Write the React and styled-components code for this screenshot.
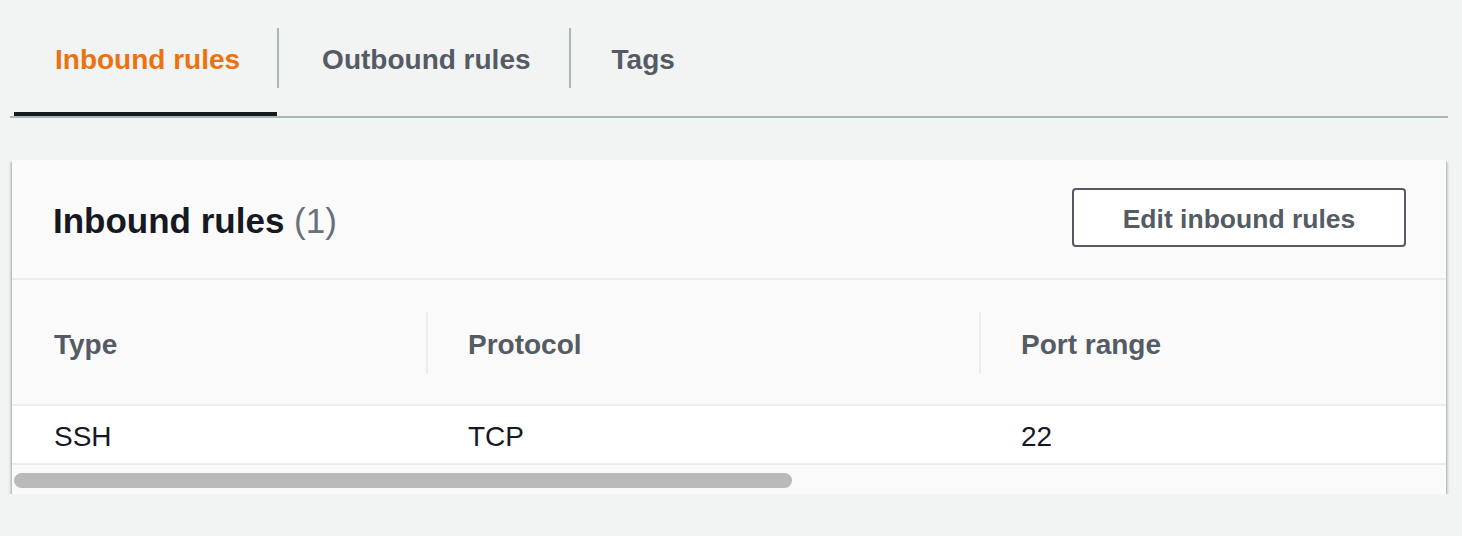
import React from "react";
import styled, { createGlobalStyle } from "styled-components";

const GlobalStyle = createGlobalStyle`
  html, body {
    margin: 0;
    padding: 0;
    background: #f2f3f3;
    font-family: "Liberation Sans", Arial, sans-serif;
    -webkit-font-smoothing: antialiased;
  }
`;

const Page = styled.div`
  box-sizing: border-box;
  width: 1462px;
  padding: 0 14px 0 10px;
`;

const TabList = styled.div`
  display: flex;
  align-items: flex-start;
  padding-left: 4px;
  border-bottom: 2px solid #aab7b8;
`;

const Tab = styled.button`
  appearance: none;
  background: none;
  border: 0;
  border-bottom: 4px solid ${(p) => (p.$active ? "#16191f" : "transparent")};
  padding: 28px 0 24px;
  margin: 0;
  cursor: pointer;
  font-family: inherit;
`;

const TabLabel = styled.span`
  display: block;
  height: 60px;
  line-height: 64px;
  padding: 0 ${(p) => p.$pr}px 0 ${(p) => p.$pl}px;
  font-size: 28px;
  font-weight: 700;
  color: ${(p) => (p.$active ? "#ec7211" : "#545b64")};
  white-space: nowrap;
`;

const TabDivider = styled.span`
  display: block;
  width: 2px;
  height: 60px;
  margin-top: 28px;
  background: #aab7b8;
`;

const Card = styled.section`
  margin: 42px 2px 0 2px;
  background: #fafafa;
  box-shadow: 0 2px 2px 0 rgba(0, 28, 36, 0.3), 2px 2px 2px 0 rgba(0, 28, 36, 0.15),
    -2px 2px 2px 0 rgba(0, 28, 36, 0.15);
  overflow: hidden;
`;

const CardHeader = styled.header`
  display: flex;
  align-items: center;
  justify-content: space-between;
  height: 118px;
  padding: 0 40px 0 41px;
  border-bottom: 2px solid #eaeded;
`;

const Heading = styled.h2`
  margin: 0;
  padding-top: 4px;
  font-size: 35px;
  font-weight: 700;
  color: #16191f;
`;

const Count = styled.span`
  font-weight: 400;
  color: #687078;
`;

const Button = styled.button`
  appearance: none;
  box-sizing: border-box;
  width: 334px;
  height: 59px;
  margin-top: -3px;
  background: #ffffff;
  border: 2px solid #545b64;
  border-radius: 4px;
  font-family: inherit;
  font-size: 26.5px;
  font-weight: 700;
  color: #545b64;
  cursor: pointer;
  padding: 3px 0 0;
`;

const TableWrap = styled.div`
  overflow: hidden;
`;

const Table = styled.table`
  border-collapse: collapse;
  width: ${(p) => p.$width}px;
  table-layout: fixed;
`;

const HeadRow = styled.tr`
  height: 125px;
  border-bottom: 2px solid #eaeded;
`;

const Th = styled.th`
  width: ${(p) => p.$w}px;
  padding: 0;
  text-align: left;
  vertical-align: middle;
`;

const ThInner = styled.div`
  display: flex;
  align-items: center;
  height: 62px;
  margin-top: 2px;
  padding-left: ${(p) => (p.$first ? 42 : 40)}px;
  padding-top: 4px;
  border-left: ${(p) => (p.$first ? "none" : "2px solid #eaeded")};
  box-sizing: border-box;
  font-size: 28px;
  font-weight: 700;
  color: #545b64;
`;

const BodyRow = styled.tr`
  height: 59px;
  background: #ffffff;
  border-bottom: 2px solid #eaeded;
`;

const Td = styled.td`
  padding: 4px 0 0 42px;
  font-size: 28px;
  color: #16191f;
  vertical-align: middle;
`;

const ScrollTrack = styled.div`
  height: 29px;
  box-sizing: border-box;
  padding: 8px 0 0 2px;
  background: #fafafa;
`;

const ScrollThumb = styled.div`
  height: 15px;
  border-radius: 8px;
  background: #b9b9b9;
`;

const columns = [
  { key: "type", label: "Type", width: 414 },
  { key: "protocol", label: "Protocol", width: 553 },
  { key: "port", label: "Port range", width: 1672 },
];

const rows = [{ type: "SSH", protocol: "TCP", port: "22" }];

const VISIBLE = 1434;
const TRACK = 1432;

export default function App() {
  const total = columns.reduce((s, c) => s + c.width, 0);
  const thumbWidth = Math.round((VISIBLE / total) * TRACK * 1.0);
  return (
    <Page>
      <GlobalStyle />
      <TabList>
        <Tab $active>
          <TabLabel $active $pl={41} $pr={37}>Inbound rules</TabLabel>
        </Tab>
        <TabDivider />
        <Tab>
          <TabLabel $pl={43} $pr={38}>Outbound rules</TabLabel>
        </Tab>
        <TabDivider />
        <Tab>
          <TabLabel $pl={41} $pr={41}>Tags</TabLabel>
        </Tab>
      </TabList>

      <Card>
        <CardHeader>
          <Heading>
            Inbound rules <Count>(1)</Count>
          </Heading>
          <Button>Edit inbound rules</Button>
        </CardHeader>
        <TableWrap>
          <Table $width={total}>
            <thead>
              <HeadRow>
                {columns.map((c, i) => (
                  <Th key={c.key} $w={c.width}>
                    <ThInner $first={i === 0}>{c.label}</ThInner>
                  </Th>
                ))}
              </HeadRow>
            </thead>
            <tbody>
              {rows.map((r, ri) => (
                <BodyRow key={ri}>
                  {columns.map((c) => (
                    <Td key={c.key}>{r[c.key]}</Td>
                  ))}
                </BodyRow>
              ))}
            </tbody>
          </Table>
        </TableWrap>
        <ScrollTrack>
          <ScrollThumb style={{ width: `${thumbWidth}px` }} />
        </ScrollTrack>
      </Card>
    </Page>
  );
}
